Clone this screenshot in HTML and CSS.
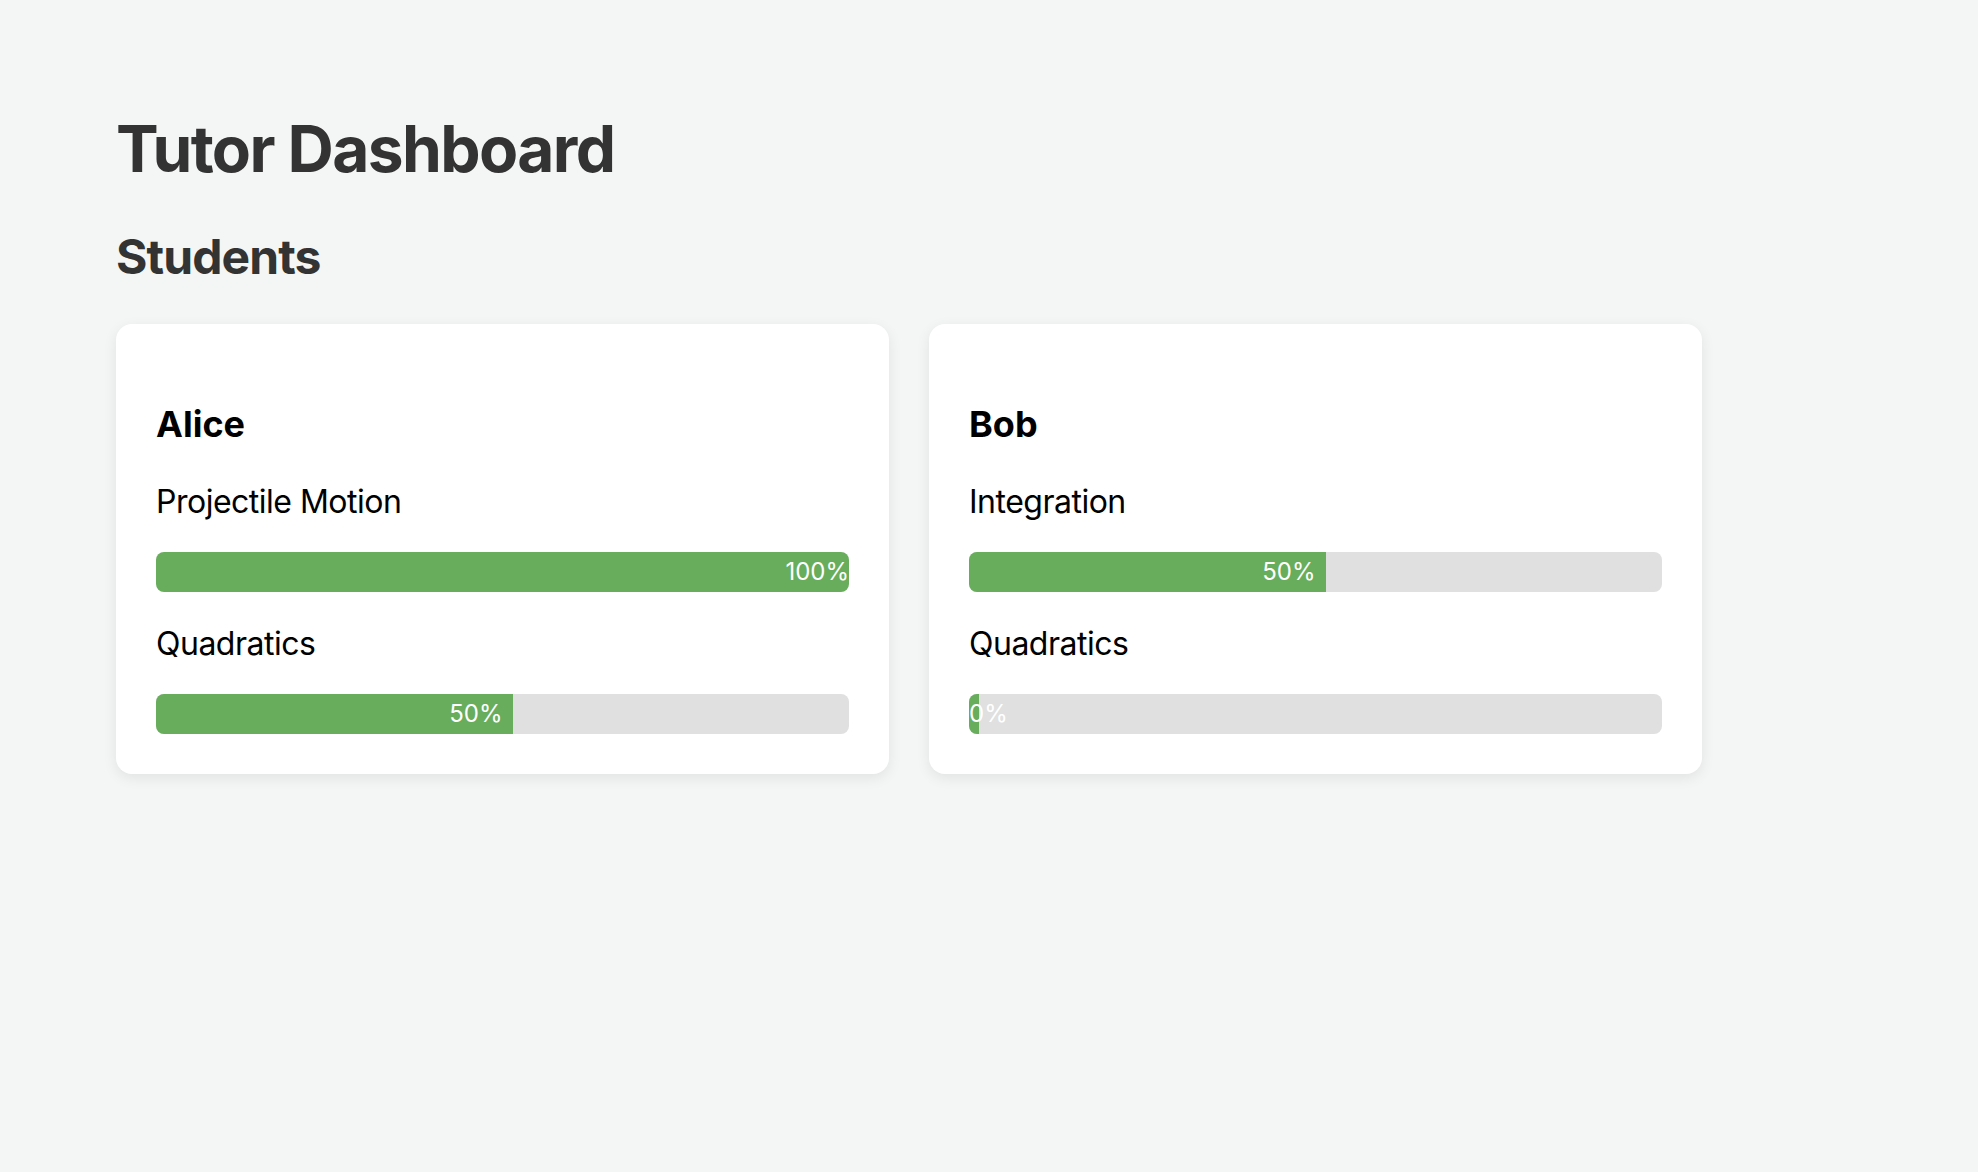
FILE: index.html
```html
<!DOCTYPE html>
<html lang="en">
<head>
<meta charset="utf-8">
<title>Tutor Dashboard</title>
<link rel="stylesheet" href="styles.css">
</head>
<body>
<main class="page">
  <h1 class="title">Tutor Dashboard</h1>
  <h2 class="section-title">Students</h2>
  <div class="cards">
    <section class="card">
      <h3 class="student">Alice</h3>
      <p class="topic">Projectile Motion</p>
      <div class="bar"><div class="fill" style="width: 100%">100%</div></div>
      <p class="topic">Quadratics</p>
      <div class="bar"><div class="fill" style="width: 50%">50%</div></div>
    </section>
    <section class="card">
      <h3 class="student">Bob</h3>
      <p class="topic">Integration</p>
      <div class="bar"><div class="fill" style="width: 50%">50%</div></div>
      <p class="topic">Quadratics</p>
      <div class="bar"><div class="fill" style="width: 0%">0%</div></div>
    </section>
  </div>
</main>
</body>
</html>
```

FILE: styles.css
```css
html, body {
  margin: 0;
  padding: 0;
}

body {
  background: #f4f6f5;
  font-family: Inter, "Noto Sans", "Liberation Sans", sans-serif;
  color: #000;
}

.page {
  padding: 110px 116px 40px;
}

.title {
  margin: 0;
  font-size: 64px;
  line-height: 78px;
  font-weight: 700;
  letter-spacing: -1.6px;
  color: #333;
}

.section-title {
  margin: 40px 0 38px;
  font-size: 48px;
  line-height: 58px;
  font-weight: 700;
  letter-spacing: -0.9px;
  color: #333;
}

.cards {
  display: grid;
  grid-template-columns: repeat(2, 773px);
  gap: 40px;
  align-items: start;
}

.card {
  background: #fff;
  border-radius: 16px;
  padding: 40px;
  box-shadow: 0 4px 14px rgba(0, 0, 0, 0.08);
}

.student {
  margin: 38px 0 37px;
  font-size: 36px;
  line-height: 44px;
  font-weight: 700;
}

.topic {
  margin: 33px 0 31px;
  font-size: 32px;
  line-height: 38px;
  font-weight: 400;
  letter-spacing: -0.5px;
}

.bar {
  height: 40px;
  background: #e0e0e0;
  border-radius: 8px;
  overflow: hidden;
}

.fill {
  height: 40px;
  padding-right: 10px;
  background: #68ad5c;
  color: #fff;
  font-size: 24px;
  line-height: 40px;
  text-align: right;
  white-space: nowrap;
}
```
